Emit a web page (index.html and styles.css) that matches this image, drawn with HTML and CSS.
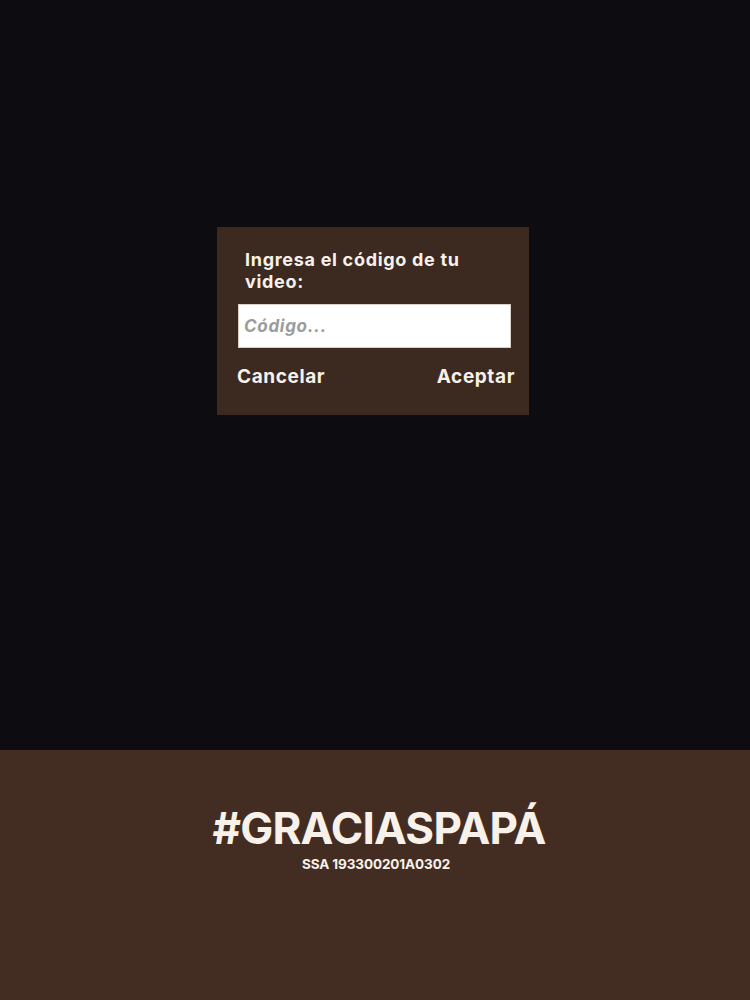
FILE: index.html
```html
<!DOCTYPE html>
<html lang="es">
  <head>
    <meta charset="UTF-8">
    <meta name="viewport" content="width=device-width, initial-scale=1.0">
    <title>#GRACIASPAPÁ</title>
    <link rel="stylesheet" href="styles.css">
  </head>
  <body>
    <div id="stage">
      <div class="dialog">
        <p class="dialog-title">Ingresa el código de tu video:</p>
        <input type="text" class="code-input" placeholder="Código...">
        <div class="dialog-buttons">
          <button class="btn">Cancelar</button>
          <button class="btn">Aceptar</button>
        </div>
      </div>
    </div>
    <div id="footer">
      <h1 class="hashtag">#GRACIASPAPÁ</h1>
      <p class="legal">SSA 193300201A0302</p>
    </div>
  </body>
</html>
```

FILE: styles.css
```css
body {
    margin: 0;
    font-family: Inter, "Open Sans", sans-serif;
    background-color: #0d0c10;
    color: #f7f1ea;
}
#stage {
    height: 750px;
    display: flex;
    justify-content: center;
    align-items: flex-start;
    padding-top: 227px;
    box-sizing: border-box;
}
.dialog {
    width: 312px;
    height: 188px;
    margin-left: -4px;
    background-color: #3c2a21;
    box-sizing: border-box;
    padding: 22px 14px 0 20px;
}
.dialog-title {
    margin: 0 0 11px 8px;
    font-size: 18px;
    font-weight: 700;
    line-height: 22px;
    letter-spacing: 0.7px;
    width: 240px;
}
.code-input {
    display: block;
    width: 273px;
    height: 44px;
    margin-left: 1px;
    box-sizing: border-box;
    border: 1px solid #d9cfc6;
    background: #fff;
    padding: 0 5px;
    font-family: Inter, "Open Sans", sans-serif;
    font-size: 17px;
    font-weight: 700;
    font-style: italic;
    letter-spacing: 0.7px;
    outline: none;
}
.code-input::placeholder {
    color: #9b9b9b;
}
.dialog-buttons {
    display: flex;
    justify-content: space-between;
    margin-top: 17px;
}
.btn {
    background: none;
    border: none;
    padding: 0;
    color: #f7f1ea;
    font-family: Inter, "Open Sans", sans-serif;
    font-size: 19px;
    font-weight: 700;
    letter-spacing: 0.6px;
    cursor: pointer;
}
#footer {
    height: 250px;
    background-color: #432d22;
    text-align: center;
    padding-top: 50px;
    box-sizing: border-box;
}
.hashtag {
    margin: 0 0 0 8px;
    font-size: 44px;
    font-weight: 700;
    line-height: 56px;
    letter-spacing: -0.8px;
}
.legal {
    margin: 0 0 0 2px;
    font-size: 13.5px;
    font-weight: 700;
    letter-spacing: -0.1px;
}
```
